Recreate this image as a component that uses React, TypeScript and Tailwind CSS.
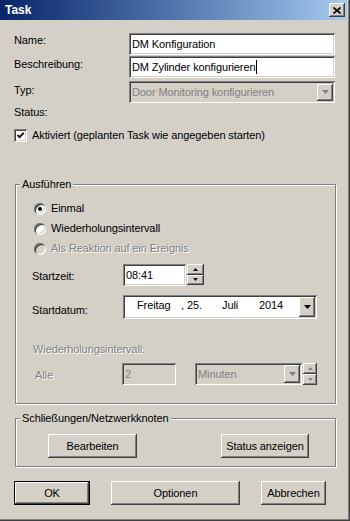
import React from "react";

// classic 3D bevels
const sunken =
  "shadow-[inset_1px_1px_0_#808080,inset_-1px_-1px_0_#ffffff,inset_2px_2px_0_#404040,inset_-2px_-2px_0_#d4d0c8]";
const raised =
  "shadow-[inset_-1px_-1px_0_#404040,inset_1px_1px_0_#ffffff,inset_-2px_-2px_0_#808080,inset_2px_2px_0_#d4d0c8]";
const etched = "border border-[#808080] shadow-[inset_1px_1px_0_#ffffff,1px_1px_0_#ffffff]";
const disabledText = "text-[#808080] [text-shadow:1px_1px_0_#ffffff]";

function Arrow({ up = false, disabled = false, size = 7 }: { up?: boolean; disabled?: boolean; size?: number }) {
  const h = Math.ceil(size / 2);
  return (
    <svg width={size} height={h} viewBox={`0 0 ${size} ${h}`} className="block">
      <polygon
        points={up ? `0,${h} ${size},${h} ${size / 2},0` : `0,0 ${size},0 ${size / 2},${h}`}
        fill={disabled ? "#808080" : "#000000"}
      />
    </svg>
  );
}

function DropButton({ disabled = false, className = "" }: { disabled?: boolean; className?: string }) {
  return (
    <div className={`flex items-center justify-center bg-[#d4d0c8] ${raised} ${className}`}>
      <Arrow disabled={disabled} />
    </div>
  );
}

function Spinner({ disabled = false, className = "" }: { disabled?: boolean; className?: string }) {
  return (
    <div className={`flex flex-col ${className}`}>
      <div className={`flex-1 flex items-center justify-center bg-[#d4d0c8] ${raised}`}>
        <Arrow up disabled={disabled} size={5} />
      </div>
      <div className={`flex-1 flex items-center justify-center bg-[#d4d0c8] ${raised}`}>
        <Arrow disabled={disabled} size={5} />
      </div>
    </div>
  );
}

function Radio({ checked = false, disabled = false, label }: { checked?: boolean; disabled?: boolean; label: string }) {
  return (
    <div className="flex items-center h-[13px] gap-[5px]">
      <div
        className={`w-[12px] h-[12px] rounded-full flex items-center justify-center ${
          disabled ? "bg-[#d4d0c8]" : "bg-white"
        } shadow-[inset_1px_1px_0_#808080,inset_-1px_-1px_0_#ffffff,inset_2px_2px_0_#404040,inset_-2px_-2px_0_#d4d0c8]`}
      >
        {checked && <div className="w-[4px] h-[4px] rounded-full bg-black" />}
      </div>
      <span className={disabled ? disabledText : ""}>{label}</span>
    </div>
  );
}

function Button({ label, className = "", isDefault = false }: { label: string; className?: string; isDefault?: boolean }) {
  return (
    <div
      className={`h-[24px] flex items-center justify-center bg-[#d4d0c8] ${isDefault ? "border border-black" : ""} ${className}`}
    >
      <div className={`w-full h-full flex items-center justify-center ${raised}`}>{label}</div>
    </div>
  );
}

export default function App() {
  return (
    <div
      className="w-[350px] h-[521px] flex flex-col bg-[#d4d0c8] text-black text-[11px] leading-[13px] tracking-[-0.1px] font-['Liberation_Sans',Arial,sans-serif] shadow-[inset_-1px_-1px_0_#404040,inset_-2px_-2px_0_#808080] select-none"
    >
      {/* Title bar */}
      <div className="w-[347px] h-[20px] shrink-0 flex items-center bg-gradient-to-r from-[#0a246a] to-[#a6caf0] pl-[5px] pr-[2px]">
        <span className="text-white font-bold text-[12px] leading-[14px] tracking-normal">Task</span>
        <div className={`ml-auto w-[16px] h-[14px] flex items-center justify-center bg-[#d4d0c8] ${raised}`}>
          <svg width="8" height="7" viewBox="0 0 8 7">
            <path d="M0.5 0.5 L7.5 6.5 M7.5 0.5 L0.5 6.5" stroke="#000" strokeWidth="1.6" />
          </svg>
        </div>
      </div>

      <div className="flex flex-col pl-[14px]">
        {/* Name */}
        <div className="flex items-start mt-[13px] h-[22px]">
          <span className="w-[115px] mt-[1px]">Name:</span>
          <div className={`w-[206px] h-[22px] bg-white flex items-center pl-[3px] ${sunken}`}>DM Konfiguration</div>
        </div>
        {/* Beschreibung */}
        <div className="flex items-start mt-[1px] h-[22px]">
          <span className="w-[115px] mt-[2px]">Beschreibung:</span>
          <div className={`w-[206px] h-[22px] bg-white flex items-center pl-[3px] ${sunken}`}>
            DM Zylinder konfigurieren
            <span className="w-px h-[14px] bg-black ml-[1px]" />
          </div>
        </div>
        {/* Typ */}
        <div className="flex items-start mt-[3px] h-[22px]">
          <span className="w-[115px] mt-[3px]">Typ:</span>
          <div className={`w-[206px] h-[22px] bg-[#d4d0c8] flex items-center pl-[3px] pr-[2px] ${sunken}`}>
            <span className="text-[#808080]">Door Monitoring konfigurieren</span>
            <DropButton disabled className="ml-auto w-[16px] h-[17px]" />
          </div>
        </div>
        <span className="mt-[3px]">Status:</span>

        {/* Aktiviert */}
        <div className="flex items-center mt-[10px] h-[13px] gap-[5px]">
          <div className={`w-[13px] h-[13px] bg-white flex items-center justify-center ${sunken}`}>
            <svg width="9" height="9" viewBox="0 0 9 9">
              <polyline points="1.5,4 3.5,6.2 7.8,1.8" fill="none" stroke="#000" strokeWidth="1.8" />
            </svg>
          </div>
          <span>Aktiviert (geplanten Task wie angegeben starten)</span>
        </div>

        {/* Ausführen */}
        <div className={`mt-[42px] ml-[1px] w-[321px] h-[220px] flex flex-col ${etched}`}>
          <span className="-mt-[7px] ml-[4px] px-[2px] self-start bg-[#d4d0c8]">Ausführen</span>

          <div className="flex flex-col gap-[7px] mt-[11px] ml-[18px]">
            <Radio checked label="Einmal" />
            <Radio label="Wiederholungsintervall" />
            <Radio disabled label="Als Reaktion auf ein Ereignis" />
          </div>

          {/* Startzeit */}
          <div className="flex items-start mt-[9px] ml-[16px] h-[22px]">
            <span className="w-[91px] mt-[6px]">Startzeit:</span>
            <div className={`w-[63px] h-[22px] bg-white flex items-center pl-[3px] ${sunken}`}>08:41</div>
            <Spinner className="ml-[1px] w-[17px] h-[21px]" />
          </div>

          {/* Startdatum */}
          <div className="flex items-start mt-[9px] ml-[16px] h-[24px]">
            <span className="w-[91px] mt-[9px]">Startdatum:</span>
            <div className={`w-[194px] h-[24px] bg-white flex items-start pt-[4px] pl-[14px] pr-[2px] ${sunken}`}>
              <span className="w-[44px]">Freitag</span>
              <span className="w-[41px]">, 25.</span>
              <span className="w-[37px]">Juli</span>
              <span>2014</span>
              <DropButton className="ml-auto mt-[-2px] w-[16px] h-[20px]" />
            </div>
          </div>

          <span className={`mt-[24px] ml-[17px] ${disabledText}`}>Wiederholungsintervall:</span>

          {/* Alle */}
          <div className="flex items-start mt-[7px] ml-[19px] h-[22px]">
            <span className={`w-[87px] mt-[6px] ${disabledText}`}>Alle</span>
            <div className={`w-[54px] h-[22px] bg-[#d4d0c8] flex items-center pl-[3px] text-[#808080] ${sunken}`}>2</div>
            <div className={`ml-[19px] w-[107px] h-[22px] bg-[#d4d0c8] flex items-center pl-[3px] pr-[2px] ${sunken}`}>
              <span className="text-[#808080]">Minuten</span>
              <DropButton disabled className="ml-auto w-[16px] h-[18px]" />
            </div>
            <Spinner disabled className="ml-[1px] w-[14px] h-[22px]" />
          </div>
        </div>

        {/* Schließungen/Netzwerkknoten */}
        <div className={`mt-[14px] ml-[1px] w-[321px] h-[49px] flex flex-col ${etched}`}>
          <span className="-mt-[7px] ml-[4px] px-[2px] self-start bg-[#d4d0c8]">Schließungen/Netzwerkknoten</span>
          <div className="flex mt-[9px] ml-[32px]">
            <Button label="Bearbeiten" className="w-[89px] h-[23px]" />
            <Button label="Status anzeigen" className="ml-[84px] w-[88px] h-[23px]" />
          </div>
        </div>

        {/* Dialog buttons */}
        <div className="flex mt-[14px]">
          <Button isDefault label="OK" className="w-[76px]" />
          <Button label="Optionen" className="ml-[21px] w-[129px]" />
          <Button label="Abbrechen" className="ml-[21px] w-[65px]" />
        </div>
      </div>
    </div>
  );
}
